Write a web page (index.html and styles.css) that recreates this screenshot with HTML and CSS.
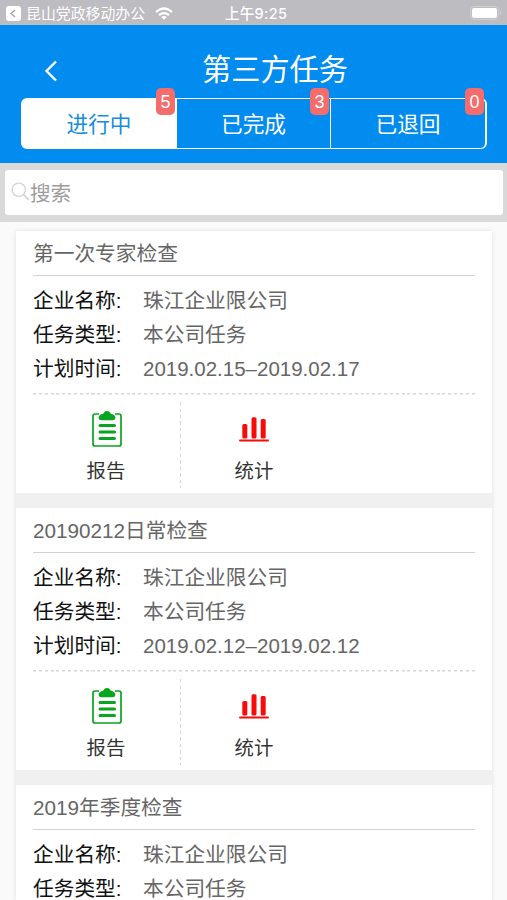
FILE: index.html
```html
<!DOCTYPE html>
<html lang="zh-CN">
<head>
<meta charset="utf-8">
<title>第三方任务</title>
<link rel="stylesheet" href="styles.css">
</head>
<body>
<svg class="defs" aria-hidden="true">
  <symbol id="report" viewBox="0 0 32 38">
    <path d="M8 4H4Q2 4 2 6V34Q2 36 4 36H28Q30 36 30 34V6Q30 4 28 4H24" fill="none" stroke="#0aa51e" stroke-width="1.700"/>
    <path d="M12.500 3.500Q13 1 16 1T19.500 3.500Q24.500 4.500 24.500 8Q24 10.200 21.500 10.200H10.500Q8 10.200 7.500 8Q7.500 4.500 12.500 3.500Z" fill="#0aa51e"/>
    <path d="M9 15.500H23.500M9 22H23.500M9 28.500H23.500" stroke="#0aa51e" stroke-width="3" stroke-linecap="round"/>
  </symbol>
  <symbol id="stats" viewBox="0 0 30 28">
    <path d="M1 25.500H29" stroke="#fb0a0a" stroke-width="2" stroke-linecap="round"/>
    <g fill="#fb0a0a"><rect x="3.300" y="9" width="5" height="14.500" rx="1.500"/><rect x="12.500" y="2.300" width="5" height="21.200" rx="1.500"/><rect x="21.700" y="4" width="5" height="19.500" rx="1.500"/></g>
  </symbol>
</svg>
<div class="status">
  <svg class="return" viewBox="0 0 15 15"><rect width="15" height="15" rx="3" fill="#fff"/><path d="M9 4L5 7.500L9 11" fill="none" stroke="#aaa9ae" stroke-width="1.600"/></svg>
  <span class="app">昆山党政移动办公</span>
  <svg class="wifi" viewBox="0 0 18 13"><g fill="none" stroke="#fff" stroke-width="2.300"><path d="M1 5Q9-2 17 5"/><path d="M4 8.200Q9 4 14 8.200"/></g><path d="M6.300 10Q9 8 11.700 10L9 12.800Z" fill="#fff"/></svg>
  <span class="time">上午9:25</span>
  <svg class="battery" viewBox="0 0 33 15"><rect x=".5" y=".5" width="28" height="13" rx="3.500" fill="none" stroke="#d0cfd4"/><rect x="2" y="2" width="25" height="10" rx="2" fill="#fff"/><path d="M30 4.500Q32.500 7 30 9.500Z" fill="#d0cfd4"/></svg>
</div>
<header>
  <div class="nav">
    <svg class="back" viewBox="0 0 14 22"><path d="M12 1.500L2.500 11L12 20.500" fill="none" stroke="#fff" stroke-width="2.400"/></svg>
    <h1>第三方任务</h1>
  </div>
  <div class="tabs">
    <div class="tab active">进行中<span class="badge">5</span></div>
    <div class="tab">已完成<span class="badge">3</span></div>
    <div class="tab">已退回<span class="badge">0</span></div>
  </div>
</header>
<div class="search">
  <div class="field">
    <svg viewBox="0 0 20 20"><circle cx="8.200" cy="8.200" r="7" fill="none" stroke="#d4d4d4" stroke-width="1.400"/><path d="M13.200 13.200L18.500 18.500" stroke="#d4d4d4" stroke-width="1.800"/></svg>
    <span>搜索</span>
  </div>
</div>
<main>
  <section class="card">
    <h2>第一次专家检查</h2>
    <dl>
      <dt>企业名称:</dt><dd>珠江企业限公司</dd>
      <dt>任务类型:</dt><dd>本公司任务</dd>
      <dt>计划时间:</dt><dd class="date">2019.02.15–2019.02.17</dd>
    </dl>
    <div class="actions">
      <div class="action"><svg class="report"><use href="#report"/></svg><span>报告</span></div>
      <div class="action"><svg class="stats"><use href="#stats"/></svg><span>统计</span></div>
    </div>
  </section>
  <section class="card">
    <h2>20190212日常检查</h2>
    <dl>
      <dt>企业名称:</dt><dd>珠江企业限公司</dd>
      <dt>任务类型:</dt><dd>本公司任务</dd>
      <dt>计划时间:</dt><dd class="date">2019.02.12–2019.02.12</dd>
    </dl>
    <div class="actions">
      <div class="action"><svg class="report"><use href="#report"/></svg><span>报告</span></div>
      <div class="action"><svg class="stats"><use href="#stats"/></svg><span>统计</span></div>
    </div>
  </section>
  <section class="card last">
    <h2>2019年季度检查</h2>
    <dl>
      <dt>企业名称:</dt><dd>珠江企业限公司</dd>
      <dt>任务类型:</dt><dd>本公司任务</dd>
    </dl>
  </section>
</main>
</body>
</html>
```
FILE: styles.css
```css
* { box-sizing: border-box; }
body {
  margin: 0;
  height: 900px;
  overflow: hidden;
  display: flex;
  flex-direction: column;
  background: #fafafa;
  font-family: "Liberation Sans", "Noto Sans CJK SC", sans-serif;
}
svg { display: block; flex: none; }
.defs { position: absolute; width: 0; height: 0; }
.status {
  flex: none;
  height: 25px;
  padding: 2px 6px 0;
  display: flex;
  align-items: center;
  background: #bdbcc1;
  color: #fff;
  font-size: 14.900px;
  line-height: 22px;
}
.return { width: 15px; height: 15px; margin-right: 5px; }
.app { width: 129px; white-space: nowrap; }
.wifi { width: 18px; height: 13px; }
.time { margin-left: 52px; font-family: Inter, "Noto Sans CJK SC", sans-serif; font-size: 14.500px; font-weight: 500; letter-spacing: .3px; white-space: nowrap; }
.battery { width: 33px; height: 15px; margin-left: auto; margin-right: -2px; }
header { flex: none; height: 138px; background: #028cf0; color: #fff; }
.nav { height: 73px; display: grid; grid-template-columns: 90px 1fr 47px; padding-top: 20px; }
.back { width: 14px; height: 22px; margin: 15px 0 0 44px; }
h1 { margin: 0; text-align: center; font-size: 29.200px; font-weight: 400; line-height: 50px; }
.tabs {
  width: 466px;
  height: 51px;
  margin-left: 21px;
  display: grid;
  grid-template-columns: 154px 154px 1fr;
  grid-template-rows: 100%;
  border: 1.500px solid #fff;
  border-right-width: 2px;
  border-radius: 6px;
}
.tab { position: relative; text-align: center; font-size: 21.700px; line-height: 51px; }
.tab + .tab { border-left: 1.500px solid #fff; }
.tab.active { background: #fff; color: #178edb; border-radius: 4px 0 0 4px; }
.badge {
  position: absolute;
  top: -11px;
  right: 1px;
  width: 19px;
  height: 27px;
  border-radius: 5px;
  background: #f56c6c;
  color: #fff;
  font-size: 18px;
  line-height: 28px;
}
.search { flex: none; height: 59px; padding: 7px 4px 8px 5px; background: #d9d9d9; }
.field { height: 45px; padding-left: 6px; display: flex; align-items: center; background: #fff; border-radius: 3px; color: #9c9c9c; font-size: 20.600px; }
.field svg { width: 19px; height: 19px; margin-top: -3px; }
.field span { line-height: 44px; padding-top: 3px; }
main {
  flex: none;
  width: 476px;
  margin: 9px 0 0 16px;
  display: flex;
  flex-direction: column;
  gap: 15px;
  background: #f0f0f0;
  box-shadow: 0 0 4px rgba(80, 110, 130, .18);
}
.card { height: 262px; padding: 0 17px; background: #fff; }
.card.last { height: 115px; overflow: hidden; }
h2 { margin: 0; height: 45px; border-bottom: 1.500px solid #d2d2d2; color: #666; font-size: 20.700px; font-weight: 400; line-height: 45px; }
dl { margin: 0; height: 117px; padding-top: 8px; display: grid; grid-template-columns: 110px 1fr; grid-auto-rows: 34px; color: #111; font-size: 20.700px; line-height: 34px; white-space: nowrap; }
dd { margin: 0; color: #666; }
.date { font-size: 20.500px; }
.actions {
  height: 100px;
  padding-top: 9px;
  display: grid;
  grid-template-columns: 148px 146px 1fr;
  background: repeating-linear-gradient(90deg, #d8d8d8 0 3px, transparent 3px 5.850px) 0 0 / 100% 1.500px no-repeat;
}
.action { height: 86px; display: flex; flex-direction: column; align-items: center; color: #333; font-size: 19.400px; line-height: 28px; }
.action:first-child { background: repeating-linear-gradient(#d4d4d4 0 3px, transparent 3px 6.500px) right 0 / 1.500px 100% no-repeat; }
.report { width: 32px; height: 38px; margin: 8px 1px 9px 0; }
.stats { width: 30px; height: 28px; margin: 13px 0 14px; }
.action:first-child span { margin-right: 2px; }
```
